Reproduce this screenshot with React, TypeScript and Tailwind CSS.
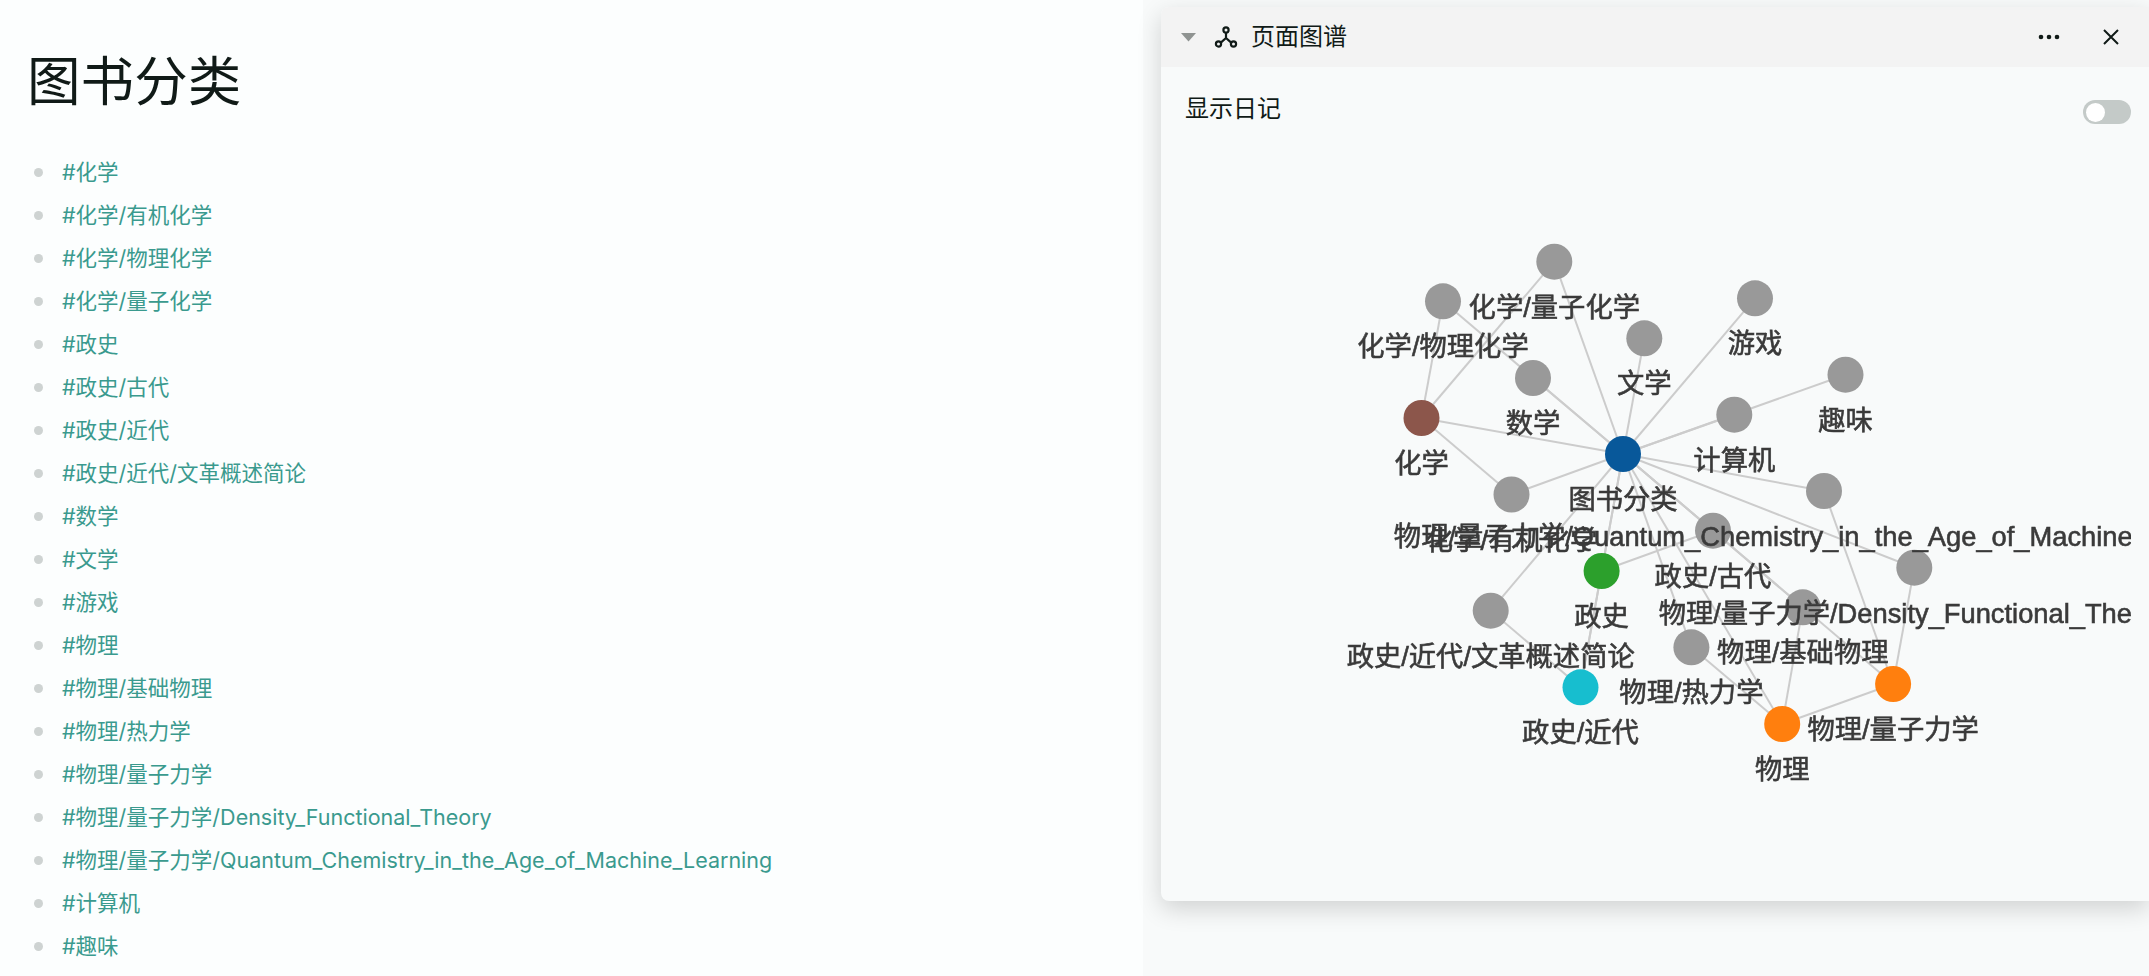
import React from "react";

const tags = [
  "#化学", "#化学/有机化学", "#化学/物理化学", "#化学/量子化学", "#政史", "#政史/古代", "#政史/近代",
  "#政史/近代/文革概述简论", "#数学", "#文学", "#游戏", "#物理", "#物理/基础物理", "#物理/热力学", "#物理/量子力学",
  "#物理/量子力学/Density_Functional_Theory", "#物理/量子力学/Quantum_Chemistry_in_the_Age_of_Machine_Learning",
  "#计算机", "#趣味",
];

type N = { id: string; x: number; y: number; c: string };
const GRAY = "#999999";
const ox = 1161;
const oy = 67;
const raw: N[] = [
  { id: "图书分类", x: 1623, y: 454, c: "#08589a" },
  { id: "化学", x: 1421.5, y: 418, c: "#8c564b" },
  { id: "化学/量子化学", x: 1554.3, y: 261.7, c: GRAY },
  { id: "化学/物理化学", x: 1443, y: 301.3, c: GRAY },
  { id: "化学/有机化学", x: 1511.5, y: 494.5, c: GRAY },
  { id: "游戏", x: 1755, y: 298.3, c: GRAY },
  { id: "文学", x: 1644.3, y: 338.3, c: GRAY },
  { id: "数学", x: 1533, y: 378, c: GRAY },
  { id: "趣味", x: 1845.5, y: 374.7, c: GRAY },
  { id: "计算机", x: 1734.3, y: 414.7, c: GRAY },
  { id: "物理/量子力学/Quantum_Chemistry_in_the_Age_of_Machine_Learning", x: 1824, y: 491, c: GRAY },
  { id: "政史/古代", x: 1713, y: 530.7, c: GRAY },
  { id: "物理/量子力学/Density_Functional_Theory", x: 1914.3, y: 567.7, c: GRAY },
  { id: "政史", x: 1601.6, y: 571, c: "#2ca02c" },
  { id: "物理/基础物理", x: 1802.8, y: 607.3, c: GRAY },
  { id: "政史/近代/文革概述简论", x: 1490.7, y: 610.7, c: GRAY },
  { id: "物理/热力学", x: 1691.4, y: 647.3, c: GRAY },
  { id: "物理/量子力学", x: 1893.1, y: 684, c: "#ff7f0e" },
  { id: "政史/近代", x: 1580.5, y: 687.3, c: "#17becf" },
  { id: "物理", x: 1782.2, y: 724, c: "#ff7f0e" },
];
const pos = Object.fromEntries(raw.map((n) => [n.id, n]));
const links: [string, string][] = [
  ...raw.slice(1).map((n) => ["图书分类", n.id] as [string, string]),
  ["化学", "化学/量子化学"], ["化学", "化学/物理化学"], ["化学", "化学/有机化学"],
  ["政史", "政史/古代"], ["政史", "政史/近代"], ["政史/近代", "政史/近代/文革概述简论"],
  ["物理", "物理/基础物理"], ["物理", "物理/热力学"], ["物理", "物理/量子力学"],
  ["物理/量子力学", "物理/量子力学/Density_Functional_Theory"],
  ["物理/量子力学", "物理/量子力学/Quantum_Chemistry_in_the_Age_of_Machine_Learning"],
];

function Graph() {
  return (
    <svg width={970} height={834} className="block blur-[0.5px]" viewBox={`${ox} ${oy} 970 834`}>
      {links.map(([a, b], i) => (
        <line key={i} x1={pos[a].x} y1={pos[a].y} x2={pos[b].x} y2={pos[b].y} stroke="#cccccc" strokeWidth={2} />
      ))}
      {raw.map((n) => (
        <circle key={n.id} cx={n.x} cy={n.y} r={18} fill={n.c} />
      ))}
      {raw.map((n) => (
        <text
          key={n.id}
          x={n.x}
          y={n.y + 55}
          textAnchor="middle"
          fontSize={27.3}
          fill="#3a3a3a"
          stroke="#3a3a3a"
          strokeWidth={0.6}
          fontFamily='"Liberation Sans", "Noto Sans CJK SC", sans-serif'
        >
          {n.id}
        </text>
      ))}
    </svg>
  );
}

export default function App() {
  return (
    <div className="flex h-[976px] w-[2149px] overflow-hidden bg-[#fcfefe] font-['Inter','Noto_Sans_CJK_SC',sans-serif]">
      <main className="w-[1143px] shrink-0 pl-[27px] pt-[50px]">
        <h1 className="text-[53.6px] leading-[64px] font-normal text-[#101a17]">图书分类</h1>
        <ul className="mt-[37px] flex flex-col">
          {tags.map((t) => (
            <li key={t} className="flex h-[43px] items-center">
              <span className="ml-[7px] h-[9px] w-[9px] rounded-full bg-[#ced3d2]" />
              <span className="ml-[19px] text-[21.5px] text-[#3a9a8e]">{t}</span>
            </li>
          ))}
        </ul>
      </main>
      <aside className="flex-1 bg-[#f8fafa] pl-[18px] pt-[7px]">
        <section className="flex h-[894px] w-[988px] flex-col overflow-hidden rounded-l-[8px] bg-[#f8fafa] shadow-[0_8px_24px_rgba(0,0,0,0.16)]">
          <header className="flex h-[60px] shrink-0 items-center bg-[#f3f3f3] pl-[20px] text-[#101a17]">
            <svg width="15" height="10" viewBox="0 0 15 10" className="shrink-0"><path d="M0 1h15L7.5 9.5z" fill="#8f9391" /></svg>
            <svg width="24" height="24" viewBox="0 0 24 24" fill="none" stroke="#101a17" strokeWidth="2.2" className="ml-[18px] shrink-0">
              <circle cx="12" cy="5" r="2.6" />
              <circle cx="4.5" cy="19" r="2.6" />
              <circle cx="19.5" cy="19" r="2.6" />
              <path d="M12 7.6V13M12 13L6.8 17.6M12 13l5.2 4.6" />
            </svg>
            <span className="ml-[13px] text-[24px] leading-none">页面图谱</span>
            <div className="ml-auto flex items-center pr-[30px]">
              <svg width="22" height="6" viewBox="0 0 22 6" fill="#101a17"><circle cx="3" cy="3" r="2.3" /><circle cx="11" cy="3" r="2.3" /><circle cx="19" cy="3" r="2.3" /></svg>
              <svg width="16" height="16" viewBox="0 0 16 16" stroke="#101a17" strokeWidth="2" className="ml-[43px]"><path d="M1 1l14 14M15 1L1 15" /></svg>
            </div>
          </header>
          <div className="relative flex-1">
            <div className="flex items-start justify-between pl-[24px] pr-[18px]">
              <span className="mt-[27px] text-[24px] leading-[30px] text-[#101a17]">显示日记</span>
              <span className="mt-[33px] flex h-[24px] w-[48px] items-center rounded-full bg-[#c4cac8] pl-[3px]">
                <span className="h-[19px] w-[19px] rounded-full bg-white" />
              </span>
            </div>
            <div className="absolute left-0 top-0"><Graph /></div>
          </div>
        </section>
      </aside>
    </div>
  );
}
